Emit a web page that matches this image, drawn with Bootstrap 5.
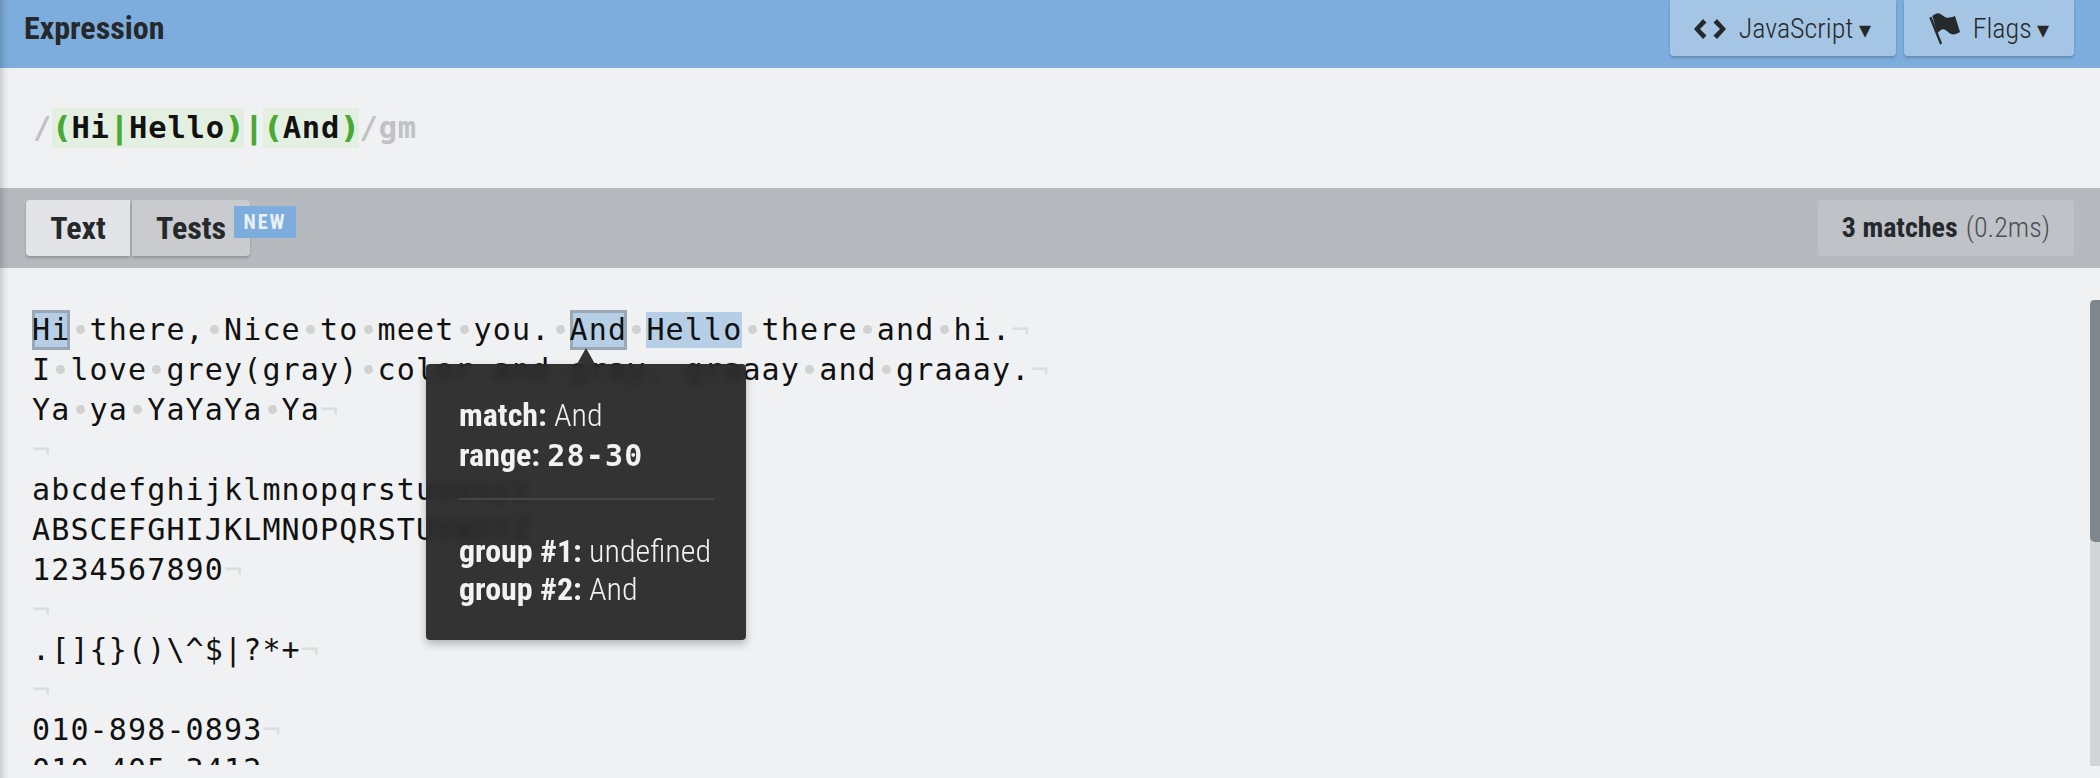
<!DOCTYPE html>
<html lang="en">
<head>
    <meta charset="UTF-8">
    <title>RegExr</title>
    <link href="https://cdn.jsdelivr.net/npm/bootstrap@5.3.0/dist/css/bootstrap.min.css" rel="stylesheet">
    <style>
        html, body { height: 100%; overflow: hidden; }
        body { background: #f0f1f3; color: #25292b; font-family: "Roboto Condensed", "Liberation Sans Narrow", Roboto, sans-serif; font-size: 28px; }
        .app-head { height: 68px; background: #7daddd; padding: 0 26px 0 24px; box-shadow: inset 9px 0 8px -8px rgba(0,0,0,.25); }
        .app-title { height: 56px; font-size: 32px; font-weight: 700; }
        .head-btn { height: 56px; padding: 2px 25px 0 24px; background: #a5c5e4; border-radius: 0 0 4px 4px; box-shadow: 0 2px 3px rgba(0,0,0,.2); font-weight: 300; gap: 13px; }
        .caret-down { font-size: 24px; margin-left: -1px; }
        .expr-box { height: 120px; padding-left: 33px; font: 700 30.5px/40px "DejaVu Sans Mono", monospace; letter-spacing: .84px; color: #111; box-shadow: inset 9px 0 8px -8px rgba(0,0,0,.25); }
        .expr-slash { color: #bfc1c4; }
        .expr-group { background: #e3f0e1; }
        .expr-green { color: #4aa932; text-shadow: 1px 0 currentColor; }
        .tools-bar { height: 80px; background: #b6b9bd; padding: 12px 26px; box-shadow: inset 9px 0 8px -8px rgba(0,0,0,.25); }
        .tab-btn { height: 56px; font-size: 32px; font-weight: 700; background: #c9cbcf; }
        .tab-text { width: 104px; background: #e3e4e7; border-radius: 4px 0 0 4px; margin-right: 2px; box-shadow: 0 2px 3px rgba(0,0,0,.2); }
        .tab-tests { width: 118px; border-radius: 0 4px 4px 0; box-shadow: 0 2px 3px rgba(0,0,0,.2); padding-left: 24px; }
        .new-tag { top: 18px; left: 234px; width: 62px; height: 32px; background: #7daddd; color: #e9f0f8; font-size: 20px; font-weight: 700; letter-spacing: 2px; }
        .match-count { height: 56px; padding: 0 24px; background: #bfc2c7; border-radius: 4px; }
        .match-time { font-weight: 300; color: #4b4f52; }
        .editor-pane { height: 510px; padding: 42px 0 0 32px; box-shadow: inset 9px 0 8px -8px rgba(0,0,0,.25); }
        .editor-text { height: 455px; overflow: hidden; font: 30px/40px "DejaVu Sans Mono", monospace; letter-spacing: 1.14px; color: #111; white-space: pre; }
        .ws { display: inline-block; width: 19.2px; text-align: center; letter-spacing: 0; }
        .ws::before { content: ""; display: inline-block; width: 9px; height: 9px; border-radius: 50%; background: #d0d2d2; vertical-align: 6px; }
        .eol { color: #dcdddf; }
        .hit { display: inline-block; height: 36px; line-height: 36px; background: #b6cfe6; }
        .hit-sel { height: 40px; line-height: 40px; box-shadow: inset 0 0 0 3px #9aa7b5; }
        .scroll-track { top: 300px; right: 0; width: 10px; bottom: 12px; background: #d2d5d6; }
        .scroll-thumb { height: 242px; background: #7f878d; border-radius: 5px 0 0 5px; }
        .match-tip { top: 364px; left: 426px; width: 320px; height: 276px; padding: 31px 32px 0 33px; background: rgba(35,35,35,.92); backdrop-filter: blur(5px); border-radius: 4px; color: #f2f2f2; font-size: 32px; font-weight: 300; line-height: 40px; box-shadow: 0 4px 8px rgba(0,0,0,.25); }
        .match-tip::before { content: ""; position: absolute; top: -16px; left: 151px; border: 9px solid transparent; border-top: 0; border-bottom: 16px solid #333; }
        .match-tip strong { font-weight: 700; }
        .tip-mono { font: 700 30px "DejaVu Sans Mono", monospace; letter-spacing: 1.14px; }
        .tip-rule { height: 2px; background: #45464a; margin: 23px 0 32px; }
        .tip-line { line-height: 38px; white-space: nowrap; }
    </style>
</head>
<body>
    <!-- Expression -->
    <header class="app-head d-flex justify-content-between">
        <div class="app-title d-flex align-items-center">Expression</div>
        <div class="d-flex gap-2">
            <div class="head-btn d-flex align-items-center">
                <svg width="32" height="20" viewBox="0 0 32 20"><path d="M9 0l3.5 3.5L6 10l6.5 6.5L9 20 0 10zM23 0l-3.5 3.5L26 10l-6.5 6.5L23 20l9-10z" fill="#25292b"/></svg>
                <span>JavaScript <span class="caret-down">▾</span></span>
            </div>
            <div class="head-btn d-flex align-items-center">
                <svg width="32" height="36" viewBox="0 0 32 36"><path d="M1.3 6.700l2.200-.9L14.200 32.500l-2.200.9z" fill="#25292b"/><path d="M4.300 5C7 3 9 2 10.300 2.300c3 .5 5.500 4 8.400 4.400C21 7 24 6 27 5l5 16c-3 2-6 2.800-8.300 2.300-3-.7-5.400-5-8.400-5-2 0-4 2-6 4z" fill="#25292b"/></svg>
                <span>Flags <span class="caret-down">▾</span></span>
            </div>
        </div>
    </header>
    <div class="expr-box d-flex align-items-center">
        <span class="expr-slash">/</span><span class="expr-group"><span class="expr-green">(</span>Hi<span class="expr-green">|</span>Hello<span class="expr-green">)</span></span><span class="expr-green">|</span><span class="expr-group"><span class="expr-green">(</span>And<span class="expr-green">)</span></span><span class="expr-slash">/gm</span>
    </div>

    <!-- Text / Tests -->
    <div class="tools-bar d-flex justify-content-between position-relative">
        <div class="d-flex">
            <div class="tab-btn tab-text d-flex align-items-center justify-content-center">Text</div>
            <div class="tab-btn tab-tests d-flex align-items-center">Tests</div>
        </div>
        <span class="new-tag position-absolute d-flex align-items-center justify-content-center">NEW</span>
        <div class="match-count d-flex align-items-center gap-2"><strong>3 matches</strong> <span class="match-time">(0.2ms)</span></div>
    </div>

    <!-- Editor -->
    <div class="editor-pane">
<div class="editor-text"><span class="hit hit-sel">Hi</span><i class="ws"></i>there,<i class="ws"></i>Nice<i class="ws"></i>to<i class="ws"></i>meet<i class="ws"></i>you.<i class="ws"></i><span class="hit hit-sel">And</span><i class="ws"></i><span class="hit">Hello</span><i class="ws"></i>there<i class="ws"></i>and<i class="ws"></i>hi.<span class="eol">¬</span>
I<i class="ws"></i>love<i class="ws"></i>grey(gray)<i class="ws"></i>color<i class="ws"></i>and<i class="ws"></i>gray,<i class="ws"></i>graaay<i class="ws"></i>and<i class="ws"></i>graaay.<span class="eol">¬</span>
Ya<i class="ws"></i>ya<i class="ws"></i>YaYaYa<i class="ws"></i>Ya<span class="eol">¬</span>
<span class="eol">¬</span>
abcdefghijklmnopqrstuvwxyz<span class="eol">¬</span>
ABSCEFGHIJKLMNOPQRSTUVWXYZ<span class="eol">¬</span>
1234567890<span class="eol">¬</span>
<span class="eol">¬</span>
.[]{}()\^$|?*+<span class="eol">¬</span>
<span class="eol">¬</span>
010-898-0893<span class="eol">¬</span>
010-405-3412<span class="eol">¬</span></div>
    </div>

    <div class="scroll-track position-absolute"><div class="scroll-thumb"></div></div>

    <!-- Tooltip -->
    <div class="match-tip position-absolute">
        <div><strong>match:</strong> And</div>
        <div><strong>range:</strong> <span class="tip-mono">28-30</span></div>
        <div class="tip-rule"></div>
        <div class="tip-line"><strong>group #1:</strong> undefined</div>
        <div class="tip-line"><strong>group #2:</strong> And</div>
    </div>

    <script src="https://cdn.jsdelivr.net/npm/bootstrap@5.3.0/dist/js/bootstrap.bundle.min.js"></script>
</body>
</html>
